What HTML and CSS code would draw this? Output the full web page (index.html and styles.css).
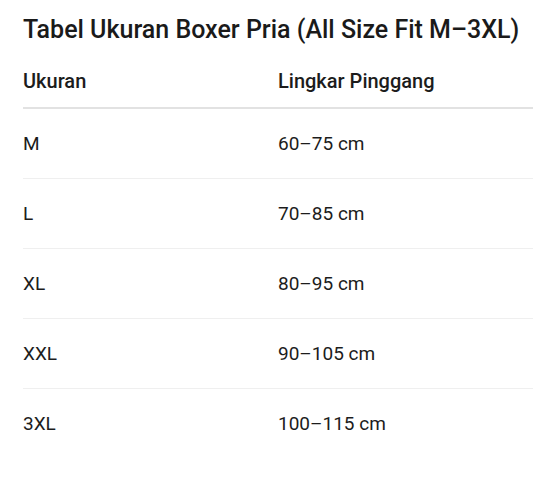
FILE: index.html
```
<!DOCTYPE html>
<html lang="id">
<head>
<meta charset="utf-8">
<title>Tabel Ukuran Boxer Pria</title>
<link rel="stylesheet" href="styles.css">
</head>
<body>
<main class="page">
  <h1 class="title">Tabel Ukuran Boxer Pria (All Size Fit M–3XL)</h1>
  <table class="size-table">
    <thead>
      <tr><th>Ukuran</th><th>Lingkar Pinggang</th></tr>
    </thead>
    <tbody>
      <tr><td>M</td><td>60–75 cm</td></tr>
      <tr><td>L</td><td>70–85 cm</td></tr>
      <tr><td>XL</td><td>80–95 cm</td></tr>
      <tr><td>XXL</td><td>90–105 cm</td></tr>
      <tr><td>3XL</td><td>100–115 cm</td></tr>
    </tbody>
  </table>
</main>
</body>
</html>
```
FILE: styles.css
```
html, body {
  margin: 0;
  padding: 0;
  background: #ffffff;
}
.page {
  padding: 16px 7px 0 23px;
  font-family: Roboto, "Liberation Sans", sans-serif;
  color: #1c1c1c;
}
.title {
  margin: 0;
  font-size: 25px;
  line-height: 28px;
  font-weight: 500;
  color: #1a1a1a;
}
.size-table {
  width: 510px;
  margin-top: 11px;
  border-collapse: collapse;
  table-layout: fixed;
}
.size-table th,
.size-table td {
  padding: 0;
  text-align: left;
  vertical-align: middle;
  line-height: 22px;
}
.size-table th {
  height: 52px;
  font-size: 20px;
  font-weight: 500;
  border-bottom: 2px solid #e2e2e2;
}
.size-table td {
  height: 69px;
  font-size: 19px;
  font-weight: 400;
  border-bottom: 1px solid #efefef;
}
.size-table tbody tr:last-child td {
  border-bottom: none;
}
```
